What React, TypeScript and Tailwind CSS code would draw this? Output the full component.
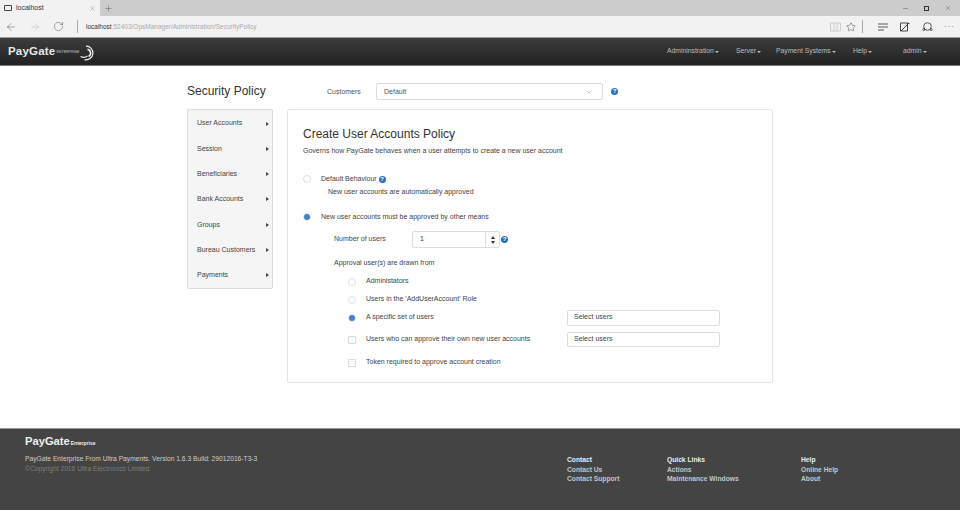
import { ArrowLeft, ArrowRight, RotateCw, Star, X, Plus, ChevronDown, Minus } from 'lucide-react'

const sidebarLinks = ['User Accounts', 'Session', 'Beneficiaries', 'Bank Accounts', 'Groups', 'Bureau Customers', 'Payments']
const navLinks = [
  { label: 'Admininstration', w: 'w-[69px]' },
  { label: 'Server', w: 'w-[40px]' },
  { label: 'Payment Systems', w: 'w-[77px]' },
  { label: 'Help', w: 'w-[50px]' },
  { label: 'admin', w: 'w-[40px]' },
]

function Help({ className = '' }: { className?: string }) {
  return (
    <span className={`flex h-[7px] w-[7px] shrink-0 items-center justify-center rounded-full bg-[#2a72b5] text-[6px] font-bold leading-none text-white ${className}`}>
      ?
    </span>
  )
}

function Radio({ checked = false }: { checked?: boolean }) {
  return (
    <span className="flex h-[8px] w-[8px] shrink-0 items-center justify-center rounded-full border border-[#e0e0e0] bg-white">
      {checked && <span className="h-[6px] w-[6px] rounded-full bg-[#3c84c6]" />}
    </span>
  )
}

function Check() {
  return <span className="h-[8px] w-[8px] shrink-0 rounded-[1px] border border-[#d8d8d8] bg-white" />
}

function Caret() {
  return <span className="ml-[1px] inline-block h-0 w-0 border-x-[2px] border-t-[2px] border-x-transparent border-t-[#bbb] align-middle" />
}

export default function App() {
  return (
    <div className="h-[520px] w-[960px] overflow-hidden bg-white font-['Liberation_Sans',sans-serif] text-[7px] text-[#444] opacity-[0.999]">
      {/* Browser tabs */}
      <div className="flex h-[16px] items-stretch bg-[#cccccc]">
        <div className="flex w-[100px] items-center bg-[#f2f2f2] pl-[4px] pr-[4px]">
          <span className="h-[6px] w-[8px] rounded-[1px] border border-[#444]" />
          <span className="ml-[4px] flex-1 text-[7px] text-[#333]">localhost</span>
          <X size={7} strokeWidth={1} className="text-[#555]" />
        </div>
        <div className="flex w-[16px] items-center justify-center">
          <Plus size={9} strokeWidth={1} className="text-[#333]" />
        </div>
        <div className="ml-auto flex items-center gap-[15px] pr-[8px] text-[#333]">
          <Minus size={7} strokeWidth={1.2} />
          <span className="h-[5px] w-[5px] border border-[#333]" />
          <X size={8} strokeWidth={1} />
        </div>
      </div>

      {/* Address bar */}
      <div className="flex h-[22px] items-center border-b border-[#999] bg-[#f2f2f2] pl-[5px] pr-[5px]">
        <ArrowLeft size={12} strokeWidth={0.8} className="text-[#333]" />
        <ArrowRight size={12} strokeWidth={0.8} className="ml-[12px] text-[#aaa]" />
        <RotateCw size={11} strokeWidth={0.9} className="ml-[12px] text-[#333]" />
        <span className="ml-[13px] h-[13px] w-px bg-[#aaa]" />
        <span className="ml-[8px] text-[6.5px] text-[#aaa]">
          <span className="text-[#333]">localhost</span>:52403/OpsManager/Administration/SecurityPolicy
        </span>
        <div className="ml-auto flex items-center text-[#333]">
          <svg width="11" height="10" viewBox="0 0 11 10" fill="none" stroke="#c4c4c4" strokeWidth="0.8">
            <rect x="0.5" y="1" width="10" height="8" />
            <path d="M4 1v8M7 1v8" />
          </svg>
          <Star size={10} strokeWidth={1.1} className="ml-[5px]" />
          <span className="ml-[6px] h-[13px] w-px bg-[#aaa]" />
          <svg width="10" height="8" viewBox="0 0 10 8" fill="none" stroke="#333" strokeWidth="0.8" className="ml-[15px]">
            <path d="M0 1h10M0 4h10M0 7h6" />
          </svg>
          <svg width="10" height="10" viewBox="0 0 10 10" fill="none" stroke="#333" strokeWidth="0.9" className="ml-[12px]">
            <path d="M0.5 1h7v8h-7zM1 9l8-8M8 0.5l1.5 1.5" />
          </svg>
          <svg width="11" height="11" viewBox="0 0 11 11" fill="none" stroke="#333" strokeWidth="0.8" className="ml-[12px]">
            <circle cx="5.5" cy="5.5" r="3.8" />
            <circle cx="1.8" cy="8.5" r="1" />
            <circle cx="9.2" cy="8.5" r="1" />
          </svg>
          <span className="ml-[11px] text-[8px] leading-none tracking-[1px] text-[#666]">···</span>
        </div>
      </div>

      {/* Top nav */}
      <nav className="flex h-[28px] items-center border-b border-[#777] bg-gradient-to-b from-[#3c3c3c] to-[#222] pl-[8px] pr-[17px]">
        <span className="text-[11.5px] font-bold tracking-[0.2px] text-[#e8e8e8]">PayGate</span>
        <span className="ml-[1px] mt-[3px] text-[3.6px] uppercase text-[#ccc]">Enterprise</span>
        <svg width="16" height="16" viewBox="0 0 16 16" fill="none" stroke="#eee" strokeWidth="1.2" className="ml-[1px] mt-[3px]">
          <path d="M6 1.2a6.8 6.8 0 1 1-1.5 13.4" />
          <path d="M7.5 4.4a3.7 3.7 0 0 1 1 7" strokeWidth="1.6" />
          <path d="M0.5 11.5c2.5 1.3 5 1.1 7-.4" />
        </svg>
        <div className="ml-auto flex items-center">
          {navLinks.map((link) => (
            <span key={link.label} className={`${link.w} whitespace-nowrap text-[6.8px] text-[#bbb]`}>
              {link.label}
              <Caret />
            </span>
          ))}
        </div>
      </nav>

      {/* Page */}
      <main className="mx-auto h-[362px] w-[586px] pt-[17px]">
        <div className="flex h-[17px] items-center">
          <h1 className="-mt-[1px] w-[140px] text-[12px] font-normal text-[#333]">Security Policy</h1>
          <span className="mt-[1px] w-[49px] text-[#555]">Customers</span>
          <div className="flex h-[17px] w-[227px] items-center justify-between rounded-[2px] border border-[#ddd] pl-[7px] pr-[9px] pt-[1px] text-[#555]">
            Default
            <ChevronDown size={8} strokeWidth={1} className="text-[#555]" />
          </div>
          <Help className="ml-[8px] -mt-[1px]" />
        </div>

        <div className="mt-[9px] flex items-start gap-[14px]">
          <aside className="flex h-[180px] w-[86px] flex-col rounded-[2px] border border-[#ddd] bg-[#f5f5f5] pl-[9px] pr-[3px] pt-[1px]">
            {sidebarLinks.map((label) => (
              <div key={label} className="flex h-[25.5px] items-center justify-between whitespace-nowrap">
                {label}
                <span className="h-0 w-0 border-y-[2px] border-l-[3px] border-y-transparent border-l-[#444]" />
              </div>
            ))}
          </aside>

          <section className="h-[274px] w-[486px] rounded-[2px] border border-[#e6e6e6] px-[15px] pt-[17px]">
            <h2 className="text-[12px] font-normal leading-[14px] text-[#333]">Create User Accounts Policy</h2>
            <p className="mt-[5px] leading-[9px]">Governs how PayGate behaves when a user attempts to create a new user account</p>

            <div className="mt-[19px] flex items-center">
              <Radio />
              <span className="ml-[10px]">Default Behaviour</span>
              <Help className="ml-[2px]" />
            </div>
            <p className="ml-[25px] mt-[2px] leading-[9px]">New user accounts are automatically approved</p>

            <div className="mt-[16px] flex items-center">
              <Radio checked />
              <span className="ml-[10px]">New user accounts must be approved by other means</span>
            </div>

            <div className="mt-[9px] flex items-center pl-[31px]">
              <span className="w-[78px]">Number of users</span>
              <div className="flex h-[17px] w-[88px] items-center rounded-[2px] border border-[#ddd] pl-[7px]">
                <span className="flex-1">1</span>
                <div className="flex h-full w-[14px] flex-col items-center justify-center gap-[2px] border-l border-[#ddd]">
                  <span className="h-0 w-0 border-x-[2px] border-b-[3px] border-x-transparent border-b-[#333]" />
                  <span className="h-0 w-0 border-x-[2px] border-t-[3px] border-x-transparent border-t-[#333]" />
                </div>
              </div>
              <Help className="ml-[1px] -mt-[1px]" />
            </div>

            <p className="ml-[31px] mt-[10px] leading-[9px]">Approval user(s) are drawn from</p>

            <div className="ml-[45px] mt-[10px] flex flex-col">
              <div className="flex h-[9px] items-center gap-[10px]">
                <Radio />
                <span>Administators</span>
              </div>
              <div className="mt-[9px] flex h-[9px] items-center gap-[10px]">
                <Radio />
                <span>Users in the 'AddUserAccount' Role</span>
              </div>
              <div className="mt-[9px] flex h-[9px] items-center gap-[10px]">
                <Radio checked />
                <span className="w-[191px] whitespace-nowrap">A specific set of users</span>
                <div className="-my-[4px] flex h-[16px] w-[153px] items-center rounded-[2px] border border-[#ddd] pl-[6px]">Select users</div>
              </div>
              <div className="mt-[13px] flex h-[9px] items-center gap-[10px]">
                <Check />
                <span className="w-[191px] whitespace-nowrap">Users who can approve their own new user accounts</span>
                <div className="-my-[4px] flex h-[15px] w-[153px] items-center rounded-[2px] border border-[#ddd] pl-[6px]">Select users</div>
              </div>
              <div className="mt-[14px] flex h-[9px] items-center gap-[10px]">
                <Check />
                <span>Token required to approve account creation</span>
              </div>
            </div>
          </section>
        </div>
      </main>

      {/* Footer */}
      <footer className="flex h-[82px] border-t border-[#999] bg-[#444] px-[25px] pt-[4px] text-[6.7px]">
        <div className="w-[542px]">
          <div className="flex items-baseline text-[#eee]">
            <span className="text-[11.2px] font-bold">PayGate</span>
            <span className="ml-[1px] text-[5px] font-bold">Enterprise</span>
          </div>
          <p className="mt-[4px] leading-[9px] text-[#ccc]">PayGate Enterprise From Ultra Payments. Version 1.6.3 Build: 29012016-T3-3</p>
          <p className="mt-[1px] leading-[10px] text-[#7d7d7d]">©Copyright 2016 Ultra Electronics Limited.</p>
        </div>
        <div className="flex flex-1 pt-[22px] font-bold leading-[9.6px] text-[#c4c4c4]">
          <div className="w-[100px]">
            <div className="text-[#eee]">Contact</div>
            <div>Contact Us</div>
            <div>Contact Support</div>
          </div>
          <div className="w-[134px]">
            <div className="text-[#eee]">Quick Links</div>
            <div>Actions</div>
            <div>Maintenance Windows</div>
          </div>
          <div>
            <div className="text-[#eee]">Help</div>
            <div>Online Help</div>
            <div>About</div>
          </div>
        </div>
      </footer>
    </div>
  )
}
